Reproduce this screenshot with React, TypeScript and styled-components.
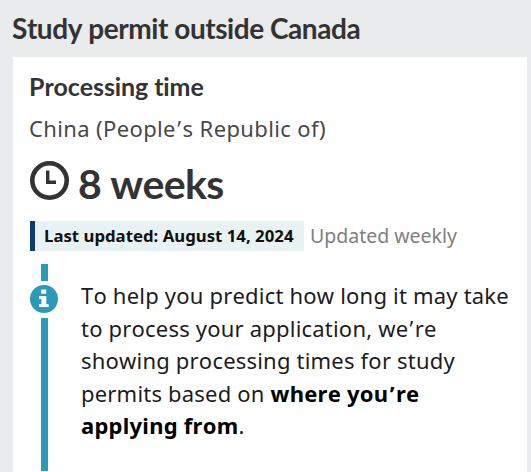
import React from "react";
import styled, { createGlobalStyle } from "styled-components";

const GlobalStyle = createGlobalStyle`
  * { box-sizing: border-box; }
  body { margin: 0; background: #eaebed; overflow: hidden; }
`;

const Page = styled.main`
  display: flex;
  flex-direction: column;
  height: 472px;
  padding: 10px 4px 0 13px;
  font-family: "Noto Sans", sans-serif;
  font-kerning: none;
  font-variant-ligatures: none;
  color: #333;
`;

const Title = styled.h1`
  margin: 0 0 11px -1px;
  height: 36px;
  font-family: Lato, sans-serif;
  font-size: 28px;
  font-weight: 700;
  letter-spacing: -0.45px;
  line-height: 36px;
  white-space: nowrap;
`;

const Card = styled.section`
  display: flex;
  flex-direction: column;
  flex: 1;
  min-height: 0;
  padding: 13px 0 0 17px;
  background: #fff;
`;

const Heading = styled.h2`
  margin: 0 0 0 -1px;
  font-family: Lato, sans-serif;
  font-size: 25px;
  font-weight: 700;
  letter-spacing: -0.1px;
  line-height: 32px;
`;

const Country = styled.p`
  margin: 10px 0 0 -1px;
  font-size: 22px;
  letter-spacing: 0.37px;
  line-height: 32px;
  color: #484848;
`;

const Apostrophe = styled.span`
  margin: 0 1.3px;
  font-family: "Open Sans", sans-serif;
`;

const Duration = styled.div`
  display: flex;
  align-items: flex-start;
  gap: 8px;
  height: 42px;
  margin-top: 16px;
`;

const ClockIcon = styled.svg`
  flex: none;
  width: 40px;
  height: 40px;
  margin-top: 1px;
`;

const Weeks = styled.strong`
  font-family: Lato, sans-serif;
  font-size: 41px;
  font-weight: 700;
  letter-spacing: -0.7px;
  line-height: 48px;
`;

const UpdateRow = styled.div`
  display: flex;
  align-items: center;
  gap: 6px;
  height: 30px;
  margin-top: 19px;
`;

const UpdateBadge = styled.span`
  height: 30px;
  width: 274px;
  padding-left: 9px;
  border-left: 5px solid #0b3c6c;
  background: #e8f1f3;
  color: #111;
  font-size: 16.8px;
  font-weight: 700;
  line-height: 30px;
  white-space: nowrap;
`;

const Frequency = styled.span`
  font-size: 19.5px;
  line-height: 30px;
  color: #808080;
`;

const Notice = styled.div`
  display: flex;
  gap: 23px;
  height: 207px;
  margin-top: 13px;
`;

const Rail = styled.div`
  display: flex;
  flex-direction: column;
  align-items: center;
  width: 28px;
  gap: 4px;
`;

const Bar = styled.span<{ $length: number }>`
  width: 7px;
  height: ${(p) => p.$length}px;
  flex: none;
  background: #2b9ab9;
`;

const InfoIcon = styled.svg`
  flex: none;
  width: 28px;
  height: 29px;
`;

const Message = styled.p`
  margin: 15.4px 0 0;
  font-size: 22px;
  letter-spacing: 0.2px;
  line-height: 32.4px;
  color: #1c1c1c;
  white-space: nowrap;

  strong { color: #000; letter-spacing: 0.25px; }
`;

export default function App() {
  return (
    <>
      <GlobalStyle />
      <Page>
        <Title>Study permit outside Canada</Title>
        <Card>
          <Heading>Processing time</Heading>
          <Country>China (People<Apostrophe>’</Apostrophe>s Republic of)</Country>
          <Duration>
            <ClockIcon viewBox="0 0 40 40" aria-hidden="true">
              <circle cx="19.5" cy="19.5" r="17.2" fill="none" stroke="#333" strokeWidth="4.6" />
              <path d="M17.7 9.5V21.3H26" fill="none" stroke="#333" strokeWidth="3.4" />
            </ClockIcon>
            <Weeks>8 weeks</Weeks>
          </Duration>
          <UpdateRow>
            <UpdateBadge>Last updated: August 14, 2024</UpdateBadge>
            <Frequency>Updated weekly</Frequency>
          </UpdateRow>
          <Notice>
            <Rail>
              <Bar $length={17} />
              <InfoIcon viewBox="0 0 28 29" aria-hidden="true">
                <circle cx="14" cy="14" r="14" fill="#2b9ab9" />
                <path d="M11.2 4.5h5v4.2h-5zM9 11h7.3v8.2h2.4v2.8H9v-2.8h2.4v-5.3H9z" fill="#fff" />
              </InfoIcon>
              <Bar $length={153} />
            </Rail>
            <Message>
              To help you predict how long it may take<br />
              to process your application, we<Apostrophe>’</Apostrophe>re<br />
              showing processing times for study<br />
              permits based on <strong>where you<Apostrophe>’</Apostrophe>re<br />
              applying from</strong>.
            </Message>
          </Notice>
        </Card>
      </Page>
    </>
  );
}
